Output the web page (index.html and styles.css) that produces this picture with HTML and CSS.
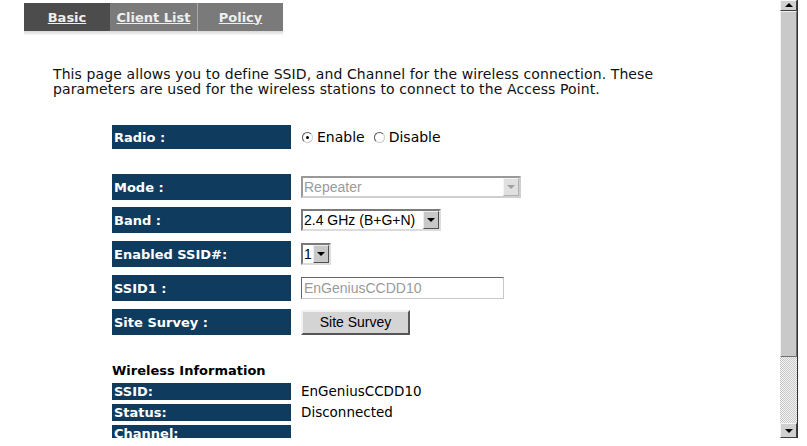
FILE: index.html
```html
<!DOCTYPE html>
<html lang="en">
<head>
  <meta charset="UTF-8" />
  <title>Wireless - Basic</title>
  <link rel="stylesheet" href="styles.css">
</head>
<body>
  <div class="window">
    <div class="content">

      <div class="tabs">
        <a href="#" class="tab active">Basic</a>
        <a href="#" class="tab">Client List</a>
        <a href="#" class="tab">Policy</a>
      </div>
      <div class="tab-shadow"></div>

      <p class="intro">This page allows you to define SSID, and Channel for the wireless connection. These<br>parameters are used for the wireless stations to connect to the Access Point.</p>

      <div class="form">
        <div class="row radio-row">
          <div class="label">Radio :</div>
          <div class="field">
            <span class="radio checked"></span><span class="radio-text">Enable</span>
            <span class="radio"></span><span class="radio-text">Disable</span>
          </div>
        </div>

        <div class="row first">
          <div class="label">Mode :</div>
          <div class="field">
            <div class="select disabled mode-select"><span class="value">Repeater</span><span class="arrow"></span></div>
          </div>
        </div>
        <div class="row">
          <div class="label">Band :</div>
          <div class="field">
            <div class="select band-select"><span class="value">2.4 GHz (B+G+N)</span><span class="arrow"></span></div>
          </div>
        </div>
        <div class="row">
          <div class="label">Enabled SSID#:</div>
          <div class="field">
            <div class="select num-select"><span class="value">1</span><span class="arrow"></span></div>
          </div>
        </div>
        <div class="row">
          <div class="label">SSID1 :</div>
          <div class="field">
            <div class="textbox">EnGeniusCCDD10</div>
          </div>
        </div>
        <div class="row">
          <div class="label">Site Survey :</div>
          <div class="field">
            <button class="btn">Site Survey</button>
          </div>
        </div>
      </div>

      <div class="info">
        <h3>Wireless Information</h3>
        <div class="info-row"><div class="info-label">SSID:</div><div class="info-value">EnGeniusCCDD10</div></div>
        <div class="info-row"><div class="info-label">Status:</div><div class="info-value">Disconnected</div></div>
        <div class="info-row"><div class="info-label">Channel:</div><div class="info-value"></div></div>
      </div>

    </div>

    <div class="scrollbar">
      <div class="sb-btn sb-up"><span class="tri-up"></span></div>
      <div class="sb-thumb"></div>
      <div class="sb-track"></div>
      <div class="sb-btn sb-down"><span class="tri-down"></span></div>
    </div>
  </div>
</body>
</html>
```

FILE: styles.css
```css
body {
  margin: 0;
  padding: 0;
  background: #fff;
  font-family: "DejaVu Sans", Verdana, sans-serif;
  color: #000;
}
.window {
  display: flex;
  width: 798px;
  height: 438px;
}
.content {
  flex: 1;
  overflow: hidden;
}

/* tabs */
.tabs {
  display: flex;
  margin: 3px 0 0 24px;
  width: 259px;
  height: 28px;
  background: #7a7a7a;
}
.tab {
  display: flex;
  align-items: center;
  justify-content: center;
  height: 28px;
  color: #eeeeee;
  font-weight: bold;
  font-size: 13px;
  text-decoration: underline;
  background: #7a7a7a;
}
.tab:nth-child(1) { width: 86px; background: #4c4c4c; }
.tab:nth-child(2) { width: 87px; border-right: 1px solid #a8a8a8; }
.tab:nth-child(3) { width: 85px; }
.tab-shadow {
  margin-left: 24px;
  width: 259px;
  height: 4px;
  background: linear-gradient(#d8d8d8, #f6f6f6);
}

.intro {
  margin: 32px 0 0 53px;
  font-size: 14px;
  line-height: 15px;
  letter-spacing: 0.1px;
  color: #111;
}

/* form rows */
.form {
  margin: 28px 0 0 112px;
}
.row {
  display: grid;
  grid-template-columns: 179px 1fr;
  column-gap: 10px;
  height: 26px;
  margin-bottom: 8px;
}
.row.first {
  margin-bottom: 7px;
}
.radio-row {
  height: 24px;
  margin-bottom: 25px;
}
.label {
  background: #0f3b5e;
  color: #fff;
  font-weight: bold;
  font-size: 13px;
  display: flex;
  align-items: center;
  padding-left: 2px;
}
.field {
  display: flex;
  align-items: center;
}
.radio {
  width: 9px;
  height: 9px;
  border-radius: 50%;
  border: 1px solid #555;
  border-right-color: #ccc;
  border-bottom-color: #ccc;
  background: #fff;
  margin: 0 4px 0 1px;
  position: relative;
}
.radio.checked::after {
  content: "";
  position: absolute;
  left: 3px;
  top: 3px;
  width: 3px;
  height: 3px;
  border-radius: 50%;
  background: #000;
}
.radio-text {
  font-size: 14px;
  margin-right: 8px;
}

/* selects and inputs */
.select, .textbox {
  display: flex;
  align-items: center;
  height: 22px;
  box-sizing: border-box;
  border: 2px solid #7a7a7a;
  border-right-color: #dcdcdc;
  border-bottom-color: #dcdcdc;
  background: #fff;
  font-family: "Liberation Sans", Arial, sans-serif;
  font-size: 14px;
}
.select .value {
  flex: 1;
  padding-left: 1px;
}
.select .arrow {
  width: 16px;
  height: 18px;
  box-sizing: border-box;
  background: #c8c8c8;
  border: 1px solid;
  border-color: #eeeeee #505050 #505050 #eeeeee;
  display: flex;
  align-items: center;
  justify-content: center;
}
.select .arrow::after {
  content: "";
  border-left: 4px solid transparent;
  border-right: 4px solid transparent;
  border-top: 4px solid #000;
}
.select.disabled { border-color: #cfcfcf; border-top-color: #999; border-left-color: #999; }
.select.disabled .value { color: #9a9a9a; }
.select.disabled .arrow { background: #e0e0e0; border-color: #f4f4f4 #b0b0b0 #b0b0b0 #f4f4f4; }
.select.disabled .arrow::after { border-top-color: #a0a0a0; }
.mode-select { width: 220px; }
.band-select { width: 140px; }
.num-select { width: 30px; }
.textbox {
  width: 203px;
  height: 22px;
  padding-left: 2px;
  color: #9a9a9a;
  border-color: #c8c8c8;
  border-top-color: #666;
  border-left-color: #666;
  border-width: 1px;
}
.btn {
  width: 109px;
  height: 25px;
  background: #d4d4d4;
  border: 2px solid;
  border-color: #f2f2f2 #555 #555 #f2f2f2;
  font-family: "Liberation Sans", Arial, sans-serif;
  font-size: 14px;
  padding: 0;
}

/* wireless information */
.info {
  margin: 27px 0 0 112px;
}
.info h3 {
  margin: 0 0 3px 0;
  font-size: 13px;
  line-height: 18px;
}
.info-row {
  display: grid;
  grid-template-columns: 179px 1fr;
  column-gap: 10px;
  height: 17px;
  margin-bottom: 4px;
}
.info-label {
  background: #0f3b5e;
  color: #fff;
  font-weight: bold;
  font-size: 13px;
  line-height: 17px;
  padding-left: 2px;
  overflow: hidden;
}
.info-value {
  font-size: 13.5px;
  line-height: 17px;
}

/* classic scrollbar */
.scrollbar {
  width: 17px;
  display: flex;
  flex-direction: column;
  border-right: 1px solid #333;
}
.sb-btn {
  background: #d0d0d0;
  display: flex;
  justify-content: center;
  box-sizing: border-box;
  border: 1px solid;
  border-color: #f4f4f4 #404040 #404040 #f4f4f4;
}
.sb-up {
  height: 11px;
  align-items: flex-start;
  padding-top: 2px;
}
.sb-down {
  height: 15px;
  align-items: center;
}
.tri-up {
  border-left: 4px solid transparent;
  border-right: 4px solid transparent;
  border-bottom: 4px solid #000;
}
.tri-down {
  border-left: 4px solid transparent;
  border-right: 4px solid transparent;
  border-top: 4px solid #000;
}
.sb-thumb {
  height: 346px;
  background: #c9c9c9;
  box-sizing: border-box;
  border: 1px solid;
  border-color: #f0f0f0 #707070 #707070 #f0f0f0;
}
.sb-track {
  flex: 1;
  background-image: repeating-conic-gradient(#c8c8c8 0 25%, #f4f4f4 0 50%);
  background-size: 2px 2px;
}
```
